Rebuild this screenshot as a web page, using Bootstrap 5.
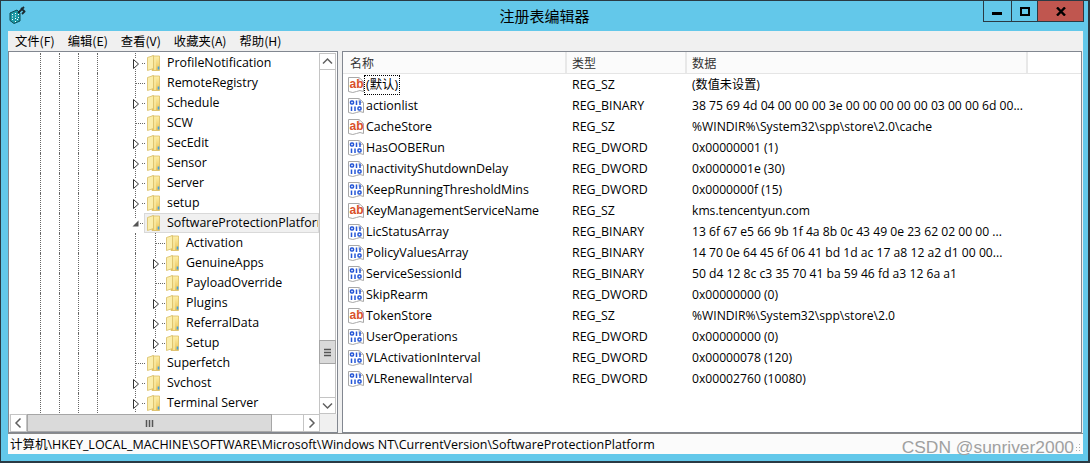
<!DOCTYPE html>
<html lang="zh"><head><meta charset="utf-8"><title>注册表编辑器</title>
<link href="https://cdn.jsdelivr.net/npm/bootstrap@5.3.0/dist/css/bootstrap.min.css" rel="stylesheet">
<style>
html,body{height:100%}
body{margin:0;background:#63c8ea;font-family:"Open Sans","Noto Sans CJK SC",sans-serif;font-size:12.4px;line-height:20px;color:#000;overflow:hidden}
.win{width:1090px;height:463px;border:solid #2a3a44;border-width:1px 2px 2px 1px;background:#63c8ea}
.tbar{height:30px}
.appic{margin:5px 0 0 8px}
.ttl{left:0;right:0;top:5px;font-size:15px;line-height:20px;text-align:center}
.wbtns{margin-right:4px;height:21px}
.wb{width:29px;border:solid #2a3a44;border-width:0 1px 1px 1px;margin-left:-1px}
.wb.mx{width:27px}
.wb.cl{width:47px;background:#c0564f}
.client{margin:0 5px 0 7px;height:423px;background:#f0f0f0}
.mbar{height:20px;font-family:"Noto Sans CJK SC",sans-serif;font-size:12.3px;padding-left:7px;gap:13px}
.panes{height:382px}
.tp{width:330px;border:1px solid #828790;background:#fff}
.split{width:4px}
.lp{width:740px;border:1px solid #828790;background:#fff}
.tbody{width:310px;overflow:hidden;padding-top:1px}
.vs{width:17px;background:#fff}
.sb{border:1px solid #c4c4c4;background:#fff;width:17px;height:17px}
.vs .up{margin-top:1px}
.vt{border-left:1px solid #c4c4c4;border-right:1px solid #c4c4c4;width:17px}
.th1{height:270px}
.vthumb{height:24px;width:17px;background:#dadada;border:1px solid #a6a6a6}
.hs{height:18px;background:#f0f0f0}
.hs .sb{height:18px;width:17px}
.hthumb{width:245px;background:#dadada;border:1px solid #a6a6a6}
.hrest{flex:1 1 0;background:#fff;border:solid #c4c4c4;border-width:1px 0}
.hs .lead0{margin-left:1px}
.hcorner{background:#f0f0f0}
.trow{height:20px;padding-left:31px;white-space:nowrap}
.gd{display:block;flex:none;width:19px;height:20px;border-left:1px dotted #666}
.gap1{display:block;flex:none;width:16px}
.gap2{display:block;flex:none;width:19px}
.gd2{display:block;flex:none;width:17px;height:20px;border-left:1px dotted #666}
.fold{flex:none;margin-right:7px}
.sel{flex:none;width:175px;height:20px;background:#f0f0f0;border:1px solid #d9d9d9;padding-left:2px;line-height:18px;overflow:hidden}
.conn{flex:none}
.lhead{height:22px;border-bottom:1px solid #e5e5e5;background:#fff;color:#333;font-family:"Noto Sans CJK SC",sans-serif;font-size:12px}
.lhead>div{background:#fbfbfb;border-right:2px solid #e8e8e8;padding-left:7px;height:21px;line-height:22px}
.lhead .hfill{background:#fff;border:0}
.c1{width:224px}.c2{width:120px}.c3{width:341px;font-size:12.15px}
.lhead .c2,.lhead .c3{padding-left:5px}
.lrow{height:21px;line-height:21px;white-space:nowrap}
.lrow .c1{padding-left:5px;display:flex;align-items:center}
.lrow .c2,.lrow .c3{padding-left:5px}
.lrow svg{margin-right:2px;flex:none}
.foc{border:1px dotted #000;padding:0 1px;margin-left:-2px;height:20px;line-height:18px}
.stat{height:21px;border-top:1px solid #8a8a8a;background:#fbfbfb;font-size:12.5px;padding-left:2px;line-height:22px;white-space:nowrap}
.wm{font-family:"Liberation Sans",sans-serif;font-size:17.4px;color:#a0a0a0;margin-left:auto;margin-right:2px;line-height:20px;padding-top:3px}
.grip{flex:none;margin:10px 2px 0 0}
</style></head><body>
<svg width="0" height="0" class="position-absolute"><defs>
<linearGradient id="fg" x1="0" x2="0" y1="0" y2="1"><stop offset="0" stop-color="#fff0a8"/><stop offset="1" stop-color="#e8c258"/></linearGradient>
<symbol id="fo" viewBox="0 0 13 16"><path d="M5 1H12.5V15.5H5Z" fill="url(#fg)" stroke="#d9bb62" stroke-width=".8"/><path d="M.5 2.5 6.5.5V13.5L.5 15.5Z" fill="#fbeeac" stroke="#d8bc66" stroke-width=".8"/><path d="M8 2V15" stroke="#f9eaa5" stroke-width="1.5"/><path d="M11.5 11.5V14.5" stroke="#3f9fe0" stroke-width="1.6"/></symbol>
<symbol id="cx" viewBox="0 0 15 20"><path d="M3.500 0V5M3.500 16V20" stroke="#666" stroke-dasharray="1 1"/><path d="M10 10.500H14" stroke="#666" stroke-dasharray="1 1"/><path d="M1.500 6.500V15.500L6.500 11Z" fill="#fff" stroke="#333"/></symbol>
<symbol id="cp" viewBox="0 0 15 20"><path d="M3.500 0V20" stroke="#666" stroke-dasharray="1 1"/><path d="M4 10.500H14" stroke="#666" stroke-dasharray="1 1"/></symbol>
<symbol id="doc" viewBox="0 0 16 16"><path d="M.5.500H11L15.500 4.500V14.500Q12 12.500 8.500 14.500T.5 14.500Z" fill="#fff" stroke="#a8a8a8"/><path d="M11 .5V4.500H15.500" fill="none" stroke="#c0c0c0"/></symbol>
<symbol id="ab" viewBox="0 0 16 16"><use href="#doc"/><text x="1.500" y="11" font-family="Liberation Sans,sans-serif" font-weight="700" font-size="12" fill="#d9502a">ab</text></symbol>
<symbol id="bn" viewBox="0 0 16 16"><use href="#doc"/><g fill="none" stroke="#2456d6" stroke-width="1.500"><rect x="2.500" y="3" width="3" height="3" rx="1"/><path d="M8.500 2.500V7M12 2.500V7"/><path d="M3.500 8.500V13M7 8.500V13"/><rect x="10" y="9" width="3" height="3" rx="1"/></g></symbol>
<symbol id="chu" viewBox="0 0 15 15"><path d="M3 9.500 7.500 5 12 9.500" fill="none" stroke="#606060" stroke-width="1.500"/></symbol>
<symbol id="chd" viewBox="0 0 15 15"><path d="M3 5.500 7.500 10 12 5.500" fill="none" stroke="#606060" stroke-width="1.500"/></symbol>
<symbol id="chl" viewBox="0 0 15 15"><path d="M9.500 3 5 7.500 9.500 12" fill="none" stroke="#606060" stroke-width="1.500"/></symbol>
<symbol id="chr" viewBox="0 0 15 15"><path d="M5.500 3 10 7.500 5.500 12" fill="none" stroke="#606060" stroke-width="1.500"/></symbol>
</defs></svg>
<div class="win">
 <div class="tbar d-flex position-relative">
  <svg class="appic" width="18" height="18" viewBox="0 0 18 18"><path d="M1 7 8 4 11 7V15L5 17.500 1 14.500Z" fill="#1d9aa6" stroke="#0d4c55"/><path d="M3 8h1v1H3zM6 7h1v1H6zM3 10.500h1v1H3zM6 9.500h1v1H6zM3 13h1v1H3zM6 12h1v1H6zM9 8h1v1H9zM9 11h1v1H9zM6 15h1v1H6zM8 13h1v1H8z" fill="#fff"/><path d="M9 7 15 1M12 2l4 4M13 8l3-3" stroke="#1c2a30" stroke-width="1.800" fill="none"/></svg>
  <div class="ttl position-absolute">注册表编辑器</div>
  <div class="wbtns d-flex ms-auto position-relative">
   <div class="wb d-flex align-items-center justify-content-center"><svg width="11" height="11" viewBox="0 0 11 11"><rect x="0" y="6" width="10" height="3"/></svg></div>
   <div class="wb mx d-flex align-items-center justify-content-center"><svg width="10" height="9" viewBox="0 0 10 9"><rect x="1" y="1" width="8" height="7" fill="none" stroke="#000" stroke-width="2"/></svg></div>
   <div class="wb cl d-flex align-items-center justify-content-center"><svg width="10" height="9" viewBox="0 0 10 9"><path d="M1 .5 9 8.500M9 .5 1 8.500" stroke="#000" stroke-width="2.400"/></svg></div>
  </div>
 </div>
 <div class="client">
  <div class="mbar d-flex"><span>文件(F)</span><span>编辑(E)</span><span>查看(V)</span><span>收藏夹(A)</span><span>帮助(H)</span></div>
  <div class="panes d-flex">
   <div class="tp d-flex flex-column">
    <div class="d-flex flex-grow-1 overflow-hidden">
     <div class="tbody">
      <div class="trow d-flex align-items-center"><i class="gd"></i><i class="gd"></i><i class="gd"></i><i class="gd"></i><i class="gap1"></i><svg class="conn" width="15" height="20"><use href="#cx"/></svg><svg class="fold" width="13" height="16"><use href="#fo"/></svg><span>ProfileNotification</span></div>
      <div class="trow d-flex align-items-center"><i class="gd"></i><i class="gd"></i><i class="gd"></i><i class="gd"></i><i class="gap1"></i><svg class="conn" width="15" height="20"><use href="#cp"/></svg><svg class="fold" width="13" height="16"><use href="#fo"/></svg><span>RemoteRegistry</span></div>
      <div class="trow d-flex align-items-center"><i class="gd"></i><i class="gd"></i><i class="gd"></i><i class="gd"></i><i class="gap1"></i><svg class="conn" width="15" height="20"><use href="#cx"/></svg><svg class="fold" width="13" height="16"><use href="#fo"/></svg><span>Schedule</span></div>
      <div class="trow d-flex align-items-center"><i class="gd"></i><i class="gd"></i><i class="gd"></i><i class="gd"></i><i class="gap1"></i><svg class="conn" width="15" height="20"><use href="#cp"/></svg><svg class="fold" width="13" height="16"><use href="#fo"/></svg><span>SCW</span></div>
      <div class="trow d-flex align-items-center"><i class="gd"></i><i class="gd"></i><i class="gd"></i><i class="gd"></i><i class="gap1"></i><svg class="conn" width="15" height="20"><use href="#cx"/></svg><svg class="fold" width="13" height="16"><use href="#fo"/></svg><span>SecEdit</span></div>
      <div class="trow d-flex align-items-center"><i class="gd"></i><i class="gd"></i><i class="gd"></i><i class="gd"></i><i class="gap1"></i><svg class="conn" width="15" height="20"><use href="#cx"/></svg><svg class="fold" width="13" height="16"><use href="#fo"/></svg><span>Sensor</span></div>
      <div class="trow d-flex align-items-center"><i class="gd"></i><i class="gd"></i><i class="gd"></i><i class="gd"></i><i class="gap1"></i><svg class="conn" width="15" height="20"><use href="#cx"/></svg><svg class="fold" width="13" height="16"><use href="#fo"/></svg><span>Server</span></div>
      <div class="trow d-flex align-items-center"><i class="gd"></i><i class="gd"></i><i class="gd"></i><i class="gd"></i><i class="gap1"></i><svg class="conn" width="15" height="20"><use href="#cx"/></svg><svg class="fold" width="13" height="16"><use href="#fo"/></svg><span>setup</span></div>
      <div class="trow d-flex align-items-center"><i class="gd"></i><i class="gd"></i><i class="gd"></i><i class="gd"></i><i class="gap1"></i><svg class="conn" width="12" height="20" viewBox="0 0 12 20"><path d="M3.500 0V5" stroke="#666" stroke-dasharray="1 1"/><path d="M8 10.500H12" stroke="#666" stroke-dasharray="1 1"/><path d="M6.500 7.500V13.500H.5Z" fill="#555"/></svg><div class="sel d-flex align-items-center"><svg class="fold" width="13" height="16"><use href="#fo"/></svg><span>SoftwareProtectionPlatform</span></div></div>
      <div class="trow d-flex align-items-center"><i class="gd"></i><i class="gd"></i><i class="gd"></i><i class="gd"></i><i class="gap2"></i><i class="gd2"></i><svg class="conn" width="14" height="20" viewBox="0 0 14 20"><use href="#cp" width="15" height="20"/></svg><svg class="fold" width="13" height="16"><use href="#fo"/></svg><span>Activation</span></div>
      <div class="trow d-flex align-items-center"><i class="gd"></i><i class="gd"></i><i class="gd"></i><i class="gd"></i><i class="gap2"></i><i class="gd2"></i><svg class="conn" width="14" height="20" viewBox="0 0 14 20"><use href="#cx" width="15" height="20"/></svg><svg class="fold" width="13" height="16"><use href="#fo"/></svg><span>GenuineApps</span></div>
      <div class="trow d-flex align-items-center"><i class="gd"></i><i class="gd"></i><i class="gd"></i><i class="gd"></i><i class="gap2"></i><i class="gd2"></i><svg class="conn" width="14" height="20" viewBox="0 0 14 20"><use href="#cp" width="15" height="20"/></svg><svg class="fold" width="13" height="16"><use href="#fo"/></svg><span>PayloadOverride</span></div>
      <div class="trow d-flex align-items-center"><i class="gd"></i><i class="gd"></i><i class="gd"></i><i class="gd"></i><i class="gap2"></i><i class="gd2"></i><svg class="conn" width="14" height="20" viewBox="0 0 14 20"><use href="#cx" width="15" height="20"/></svg><svg class="fold" width="13" height="16"><use href="#fo"/></svg><span>Plugins</span></div>
      <div class="trow d-flex align-items-center"><i class="gd"></i><i class="gd"></i><i class="gd"></i><i class="gd"></i><i class="gap2"></i><i class="gd2"></i><svg class="conn" width="14" height="20" viewBox="0 0 14 20"><use href="#cx" width="15" height="20"/></svg><svg class="fold" width="13" height="16"><use href="#fo"/></svg><span>ReferralData</span></div>
      <div class="trow d-flex align-items-center"><i class="gd"></i><i class="gd"></i><i class="gd"></i><i class="gd"></i><i class="gap2"></i><i class="gd2"></i><svg class="conn" width="14" height="20" viewBox="0 0 14 20"><use href="#cx" width="15" height="20"/></svg><svg class="fold" width="13" height="16"><use href="#fo"/></svg><span>Setup</span></div>
      <div class="trow d-flex align-items-center"><i class="gd"></i><i class="gd"></i><i class="gd"></i><i class="gd"></i><i class="gap1"></i><svg class="conn" width="15" height="20"><use href="#cp"/></svg><svg class="fold" width="13" height="16"><use href="#fo"/></svg><span>Superfetch</span></div>
      <div class="trow d-flex align-items-center"><i class="gd"></i><i class="gd"></i><i class="gd"></i><i class="gd"></i><i class="gap1"></i><svg class="conn" width="15" height="20"><use href="#cx"/></svg><svg class="fold" width="13" height="16"><use href="#fo"/></svg><span>Svchost</span></div>
      <div class="trow d-flex align-items-center"><i class="gd"></i><i class="gd"></i><i class="gd"></i><i class="gd"></i><i class="gap1"></i><svg class="conn" width="15" height="20"><use href="#cx"/></svg><svg class="fold" width="13" height="16"><use href="#fo"/></svg><span>Terminal Server</span></div>
     </div>
     <div class="vs d-flex flex-column">
      <div class="sb up"><svg class="d-block" width="15" height="15"><use href="#chu"/></svg></div>
      <div class="vt th1"></div>
      <div class="vthumb d-flex align-items-center justify-content-center"><svg width="9" height="9" viewBox="0 0 9 9"><path d="M1 1.500H8M1 4.500H8M1 7.500H8" stroke="#555" stroke-width="1.500"/></svg></div>
      <div class="vt flex-grow-1"></div>
      <div class="sb"><svg class="d-block" width="15" height="15"><use href="#chd"/></svg></div>
     </div>
    </div>
    <div class="hs d-flex">
     <div class="sb lead0"><svg class="d-block" width="15" height="16"><use href="#chl"/></svg></div>
     <div class="hthumb d-flex align-items-center justify-content-center"><svg width="9" height="9" viewBox="0 0 9 9"><path d="M1.500 1V8M4.500 1V8M7.500 1V8" stroke="#555" stroke-width="1.500"/></svg></div>
     <div class="hrest"></div>
     <div class="sb"><svg class="d-block" width="15" height="16"><use href="#chr"/></svg></div>
     <div class="vs hcorner"></div>
    </div>
   </div>
   <div class="split"></div>
   <div class="lp">
    <div class="lhead d-flex"><div class="c1">名称</div><div class="c2">类型</div><div class="c3">数据</div><div class="flex-grow-1 hfill"></div></div>
    <div>
     <div class="lrow d-flex"><div class="c1"><svg width="16" height="16"><use href="#ab"/></svg><span class="foc">(默认)</span></div><div class="c2">REG_SZ</div><div class="c3">(数值未设置)</div></div>
     <div class="lrow d-flex"><div class="c1"><svg width="16" height="16"><use href="#bn"/></svg><span>actionlist</span></div><div class="c2">REG_BINARY</div><div class="c3">38 75 69 4d 04 00 00 00 3e 00 00 00 00 00 03 00 00 6d 00...</div></div>
     <div class="lrow d-flex"><div class="c1"><svg width="16" height="16"><use href="#ab"/></svg><span>CacheStore</span></div><div class="c2">REG_SZ</div><div class="c3">%WINDIR%\System32\spp\store\2.0\cache</div></div>
     <div class="lrow d-flex"><div class="c1"><svg width="16" height="16"><use href="#bn"/></svg><span>HasOOBERun</span></div><div class="c2">REG_DWORD</div><div class="c3">0x00000001 (1)</div></div>
     <div class="lrow d-flex"><div class="c1"><svg width="16" height="16"><use href="#bn"/></svg><span>InactivityShutdownDelay</span></div><div class="c2">REG_DWORD</div><div class="c3">0x0000001e (30)</div></div>
     <div class="lrow d-flex"><div class="c1"><svg width="16" height="16"><use href="#bn"/></svg><span>KeepRunningThresholdMins</span></div><div class="c2">REG_DWORD</div><div class="c3">0x0000000f (15)</div></div>
     <div class="lrow d-flex"><div class="c1"><svg width="16" height="16"><use href="#ab"/></svg><span>KeyManagementServiceName</span></div><div class="c2">REG_SZ</div><div class="c3">kms.tencentyun.com</div></div>
     <div class="lrow d-flex"><div class="c1"><svg width="16" height="16"><use href="#bn"/></svg><span>LicStatusArray</span></div><div class="c2">REG_BINARY</div><div class="c3">13 6f 67 e5 66 9b 1f 4a 8b 0c 43 49 0e 23 62 02 00 00 ...</div></div>
     <div class="lrow d-flex"><div class="c1"><svg width="16" height="16"><use href="#bn"/></svg><span>PolicyValuesArray</span></div><div class="c2">REG_BINARY</div><div class="c3">14 70 0e 64 45 6f 06 41 bd 1d ac 17 a8 12 a2 d1 00 00...</div></div>
     <div class="lrow d-flex"><div class="c1"><svg width="16" height="16"><use href="#bn"/></svg><span>ServiceSessionId</span></div><div class="c2">REG_BINARY</div><div class="c3">50 d4 12 8c c3 35 70 41 ba 59 46 fd a3 12 6a a1</div></div>
     <div class="lrow d-flex"><div class="c1"><svg width="16" height="16"><use href="#bn"/></svg><span>SkipRearm</span></div><div class="c2">REG_DWORD</div><div class="c3">0x00000000 (0)</div></div>
     <div class="lrow d-flex"><div class="c1"><svg width="16" height="16"><use href="#ab"/></svg><span>TokenStore</span></div><div class="c2">REG_SZ</div><div class="c3">%WINDIR%\System32\spp\store\2.0</div></div>
     <div class="lrow d-flex"><div class="c1"><svg width="16" height="16"><use href="#bn"/></svg><span>UserOperations</span></div><div class="c2">REG_DWORD</div><div class="c3">0x00000000 (0)</div></div>
     <div class="lrow d-flex"><div class="c1"><svg width="16" height="16"><use href="#bn"/></svg><span>VLActivationInterval</span></div><div class="c2">REG_DWORD</div><div class="c3">0x00000078 (120)</div></div>
     <div class="lrow d-flex"><div class="c1"><svg width="16" height="16"><use href="#bn"/></svg><span>VLRenewalInterval</span></div><div class="c2">REG_DWORD</div><div class="c3">0x00002760 (10080)</div></div>
    </div>
   </div>
  </div>
  <div class="stat d-flex"><span>计算机\HKEY_LOCAL_MACHINE\SOFTWARE\Microsoft\Windows NT\CurrentVersion\SoftwareProtectionPlatform</span><span class="wm">CSDN @sunriver2000</span><svg class="grip" width="5" height="8" viewBox="0 0 5 8"><path d="M3 0h1v1H3zM0 3h1v1H0zM3 3h1v1H3zM0 6h1v1H0zM3 6h1v1H3z" fill="#aaa"/></svg></div>
 </div>
</div>
<script src="https://cdn.jsdelivr.net/npm/bootstrap@5.3.0/dist/js/bootstrap.bundle.min.js"></script>
</body></html>
